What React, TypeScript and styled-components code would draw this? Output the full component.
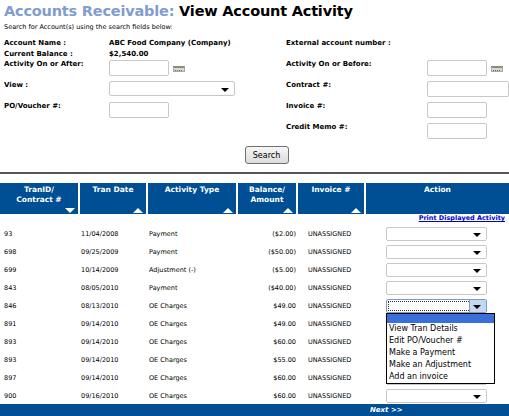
import React from "react";
import styled, { createGlobalStyle } from "styled-components";

const G = createGlobalStyle`
  body { margin: 0; background: #fff; font-family: "DejaVu Sans", Verdana, sans-serif; color: #000; }
`;
const Page = styled.div`width: 509px; height: 416px; overflow: hidden; position: relative;`;
const Title = styled.h1`
  margin: 0; padding: 3px 0 0 4px; font-size: 14.5px; font-weight: bold; font-family: "DejaVu Sans", sans-serif; letter-spacing: -0.2px;
  span { color: #819dd0; }
`;
const Sub = styled.div`font-size: 6.5px; padding: 4px 0 0 4px;`;
const Form = styled.div`
  display: grid; grid-template-columns: 105px 177px 141px 82px; padding: 8px 0 0 4px;
  font-size: 7px; font-weight: bold; row-gap: 0;
`;
const Cell = styled.div<{ h?: number }>`height: ${p => p.h ?? 21}px; display: flex; align-items: flex-start; gap: 4px; white-space: nowrap;`;
const Input = styled.div<{ w?: number }>`
  width: ${p => p.w ?? 60}px; height: 16px; border: 1px solid #c8c8c8; border-radius: 2px; background: #fff; box-sizing: border-box; flex-shrink: 0;
`;
const Cal = styled.div`
  width: 12px; height: 6px; margin-top: 6px; background: #d8d8d0; border: 1px solid #aaa; border-top: 2px solid #8c8c7c; box-sizing: border-box;
  background-image: repeating-linear-gradient(90deg, #666 0 1px, transparent 1px 2px);
  background-size: 8px 1px; background-repeat: no-repeat; background-position: 1px 2px;
`;
const Select = styled.div<{ w?: number; focus?: boolean }>`
  width: ${p => p.w ?? 101}px; height: 14px; border: 1px solid ${p => p.focus ? "#7a9cc8" : "#c8c8c8"}; border-radius: 2px; box-sizing: border-box; position: relative; background: #fff;
  ${p => p.focus ? "outline: 1px dotted #333; outline-offset: -3px;" : ""}
  &::after { content: ""; position: absolute; right: 5px; bottom: 3px; border-left: 4px solid transparent; border-right: 4px solid transparent; border-top: 4px solid #000; }
`;
const FocusBtn = styled.div`position: absolute; right: 0; top: 0; bottom: 0; width: 16px; background: #c4d8f0; border-left: 1px solid #7a9cc8;`;
const BtnRow = styled.div`display: flex; justify-content: center; padding: 2px 0 0 24px;`;
const Button = styled.button`
  font-family: "DejaVu Sans", sans-serif; font-size: 8px; width: 44px; height: 18px; padding: 0; border: 1px solid #707070; border-radius: 3px;
  background: linear-gradient(#f6f6f6, #dcdcdc); color: #000;
`;
const Rule = styled.div`height: 2px; background: #555; margin-top: 8px;`;
const Table = styled.table`
  border-collapse: separate; border-spacing: 0; width: 509px; margin-top: 9px; font-size: 6.5px;
`;
const Th = styled.th<{ arrow?: "up" | "down" }>`
  background: #004f94; color: #fff; font-size: 7.5px; font-weight: bold; height: 29px; vertical-align: top; padding: 2px 0 0; line-height: 10px;
  border-right: 2px solid #fff; position: relative;
  &:last-child { border-right: 0; }
  &::after { content: ${p => p.arrow ? '""' : "none"}; position: absolute; right: 3px; bottom: 1px;
    border-left: 5px solid transparent; border-right: 5px solid transparent;
    ${p => p.arrow === "up" ? "border-bottom: 5px solid #fff;" : "border-top: 5px solid #fff;"} }
`;
const Td = styled.td<{ right?: boolean }>`height: 18px; padding: 0 0 0 4px; text-align: ${p => p.right ? "right" : "left"}; vertical-align: middle; white-space: nowrap;`;
const PrintTd = styled.td`text-align: right; height: 11px; padding: 0 4px 0 0; vertical-align: top;
  a { color: #0000cc; font-weight: bold; font-size: 6.5px; text-decoration: underline; }`;
const Footer = styled.div`
  position: absolute; left: 0; right: 0; top: 404px; height: 12px; background: #004f94; color: #fff; font-weight: bold; font-style: italic; font-size: 7px;
  display: flex; align-items: center; padding-left: 370px;
`;
const Menu = styled.div`
  position: absolute; left: 386px; top: 313px; width: 109px; border: 1px solid #000; background: #fff; font-size: 8px; line-height: 12px; box-sizing: border-box;
`;
const Item = styled.div<{ hl?: boolean }>`padding-left: 2px; height: ${p => p.hl ? 9 : 12}px; background: ${p => p.hl ? "#3a6ed8" : "#fff"};`;

const rows = [
  ["93", "11/04/2008", "Payment", "($2.00)"],
  ["698", "09/25/2009", "Payment", "($50.00)"],
  ["699", "10/14/2009", "Adjustment (-)", "($5.00)"],
  ["843", "08/05/2010", "Payment", "($40.00)"],
  ["846", "08/13/2010", "OE Charges", "$49.00"],
  ["891", "09/14/2010", "OE Charges", "$49.00"],
  ["893", "09/14/2010", "OE Charges", "$60.00"],
  ["893", "09/14/2010", "OE Charges", "$55.00"],
  ["897", "09/14/2010", "OE Charges", "$60.00"],
  ["900", "09/16/2010", "OE Charges", "$60.00"],
];

export default function App() {
  return (
    <Page>
      <G />
      <Title><span>Accounts Receivable:</span> View Account Activity</Title>
      <Sub>Search for Account(s) using the search fields below:</Sub>
      <Form>
        <Cell h={11}>Account Name :</Cell><Cell h={11}>ABC Food Company (Company)</Cell><Cell h={11}>External account number :</Cell><Cell h={11} />
        <Cell h={10}>Current Balance :</Cell><Cell h={10}>$2,540.00</Cell><Cell h={10} /><Cell h={10} />
        <Cell>Activity On or After:</Cell><Cell><Input /><Cal /></Cell><Cell>Activity On or Before:</Cell><Cell><Input /><Cal /></Cell>
        <Cell>View :</Cell><Cell><Select w={126} style={{ height: 15 }} /></Cell><Cell>Contract #:</Cell><Cell><Input w={82} /></Cell>
        <Cell>PO/Voucher #:</Cell><Cell><Input /></Cell><Cell>Invoice #:</Cell><Cell><Input /></Cell>
        <Cell /><Cell /><Cell>Credit Memo #:</Cell><Cell><Input /></Cell>
      </Form>
      <BtnRow><Button>Search</Button></BtnRow>
      <Rule />
      <Table>
        <colgroup>
          <col style={{ width: 80 }} /><col style={{ width: 68 }} /><col style={{ width: 90 }} /><col style={{ width: 60 }} /><col style={{ width: 68 }} /><col />
        </colgroup>
        <thead>
          <tr>
            <Th arrow="down">TranID/<br />Contract #</Th>
            <Th arrow="up">Tran Date</Th>
            <Th arrow="up">Activity Type</Th>
            <Th arrow="up">Balance/<br />Amount</Th>
            <Th arrow="up">Invoice #</Th>
            <Th>Action</Th>
          </tr>
        </thead>
        <tbody>
          <tr><td colSpan={5} /><PrintTd><a>Print Displayed Activity</a></PrintTd></tr>
          {rows.map((r, i) => (
            <tr key={i}>
              <Td>{r[0]}</Td><Td style={{ paddingLeft: 1 }}>{r[1]}</Td><Td style={{ paddingLeft: 1 }}>{r[2]}</Td>
              <Td right style={{ paddingRight: 2 }}>{r[3]}</Td><Td style={{ paddingLeft: 10 }}>UNASSIGNED</Td>
              <Td style={{ paddingLeft: 20 }}><Select focus={i === 4}>{i === 4 && <FocusBtn />}</Select></Td>
            </tr>
          ))}
        </tbody>
      </Table>
      <Menu>
        <Item hl />
        <Item>View Tran Details</Item>
        <Item>Edit PO/Voucher #</Item>
        <Item>Make a Payment</Item>
        <Item>Make an Adjustment</Item>
        <Item>Add an invoice</Item>
      </Menu>
      <Footer>Next &gt;&gt;</Footer>
    </Page>
  );
}
